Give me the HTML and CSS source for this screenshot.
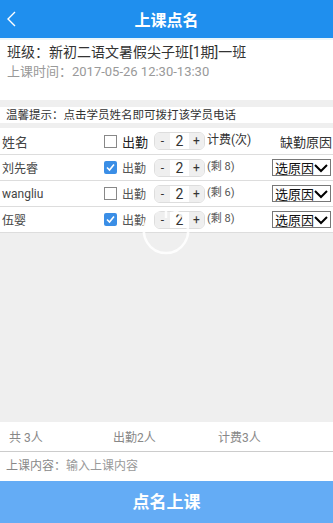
FILE: index.html
```html
<!DOCTYPE html>
<html>
  <head>
    <meta charset="utf-8" />
    <meta name="viewport" content="width=device-width, initial-scale=1">
    <title>上课点名</title>
    <link rel="stylesheet" href="styles.css">
  </head>
  <body>
    <div class="page">
      <div class="topbar">
        <svg class="back" width="10" height="16" viewBox="0 0 10 16"><polyline points="8,1 1,8 8,15" fill="none" stroke="#fff" stroke-width="1.4"/></svg>
        <div class="title">上课点名</div>
      </div>
      <div class="info">
        <div class="cls">班级：新初二语文暑假尖子班[1期]一班</div>
        <div class="time">上课时间：2017-05-26 12:30-13:30</div>
      </div>
      <div class="tip">温馨提示：点击学员姓名即可拨打该学员电话</div>
      <div class="table">
        <div class="row head">
          <div class="name">姓名</div>
          <div class="att"><span class="box"></span><span>出勤</span></div>
          <div class="step"><span class="btn">-</span><span class="val">2</span><span class="btn">+</span></div>
          <div class="fee">计费(次)</div>
          <div class="reason">缺勤原因</div>
        </div>
        <div class="row">
          <div class="name">刘先睿</div>
          <div class="att"><span class="box on"><svg width="13" height="13" viewBox="0 0 13 13"><polyline points="3,6.5 5.5,9 10,3.5" fill="none" stroke="#fff" stroke-width="1.6"/></svg></span><span>出勤</span></div>
          <div class="step"><span class="btn">-</span><span class="val">2</span><span class="btn">+</span></div>
          <div class="fee">(剩 8)</div>
          <div class="reason"><span class="sel">选原因<svg width="14" height="10" viewBox="0 0 14 10"><polyline points="1,2 7,8 13,2" fill="none" stroke="#000" stroke-width="2"/></svg></span></div>
        </div>
        <div class="row">
          <div class="name">wangliu</div>
          <div class="att"><span class="box"></span><span>出勤</span></div>
          <div class="step"><span class="btn">-</span><span class="val">2</span><span class="btn">+</span></div>
          <div class="fee">(剩 6)</div>
          <div class="reason"><span class="sel">选原因<svg width="14" height="10" viewBox="0 0 14 10"><polyline points="1,2 7,8 13,2" fill="none" stroke="#000" stroke-width="2"/></svg></span></div>
        </div>
        <div class="row">
          <div class="name">伍婴</div>
          <div class="att"><span class="box on"><svg width="13" height="13" viewBox="0 0 13 13"><polyline points="3,6.5 5.5,9 10,3.5" fill="none" stroke="#fff" stroke-width="1.6"/></svg></span><span>出勤</span></div>
          <div class="step"><span class="btn">-</span><span class="val">2</span><span class="btn">+</span></div>
          <div class="fee">(剩 8)</div>
          <div class="reason"><span class="sel">选原因<svg width="14" height="10" viewBox="0 0 14 10"><polyline points="1,2 7,8 13,2" fill="none" stroke="#000" stroke-width="2"/></svg></span></div>
        </div>
      </div>
      <div class="empty"></div>
      <div class="summary">
        <span class="s1">共 3人</span>
        <span class="s2">出勤2人</span>
        <span class="s3">计费3人</span>
      </div>
      <div class="content">上课内容：<span class="ph">输入上课内容</span></div>
      <div class="submit">点名上课</div>
      <svg class="spinner" width="50" height="50" viewBox="0 0 50 50">
        <path d="M27 3.2 A22 22 0 1 1 23 3.2" fill="none" stroke="rgba(255,255,255,0.85)" stroke-width="2.5"/>
        <line x1="25" y1="1" x2="25" y2="12" stroke="rgba(255,255,255,0.85)" stroke-width="2.5"/>
      </svg>
    </div>
  </body>
</html>
```

FILE: styles.css
```css
*{
  box-sizing: border-box;
}
body{
  margin: 0;
  font-family: Roboto, "Noto Sans CJK SC", sans-serif;
  color: #333;
}
.page{
  position: relative;
  width: 333px;
  height: 523px;
  display: flex;
  flex-direction: column;
  background: #efefef;
}
.topbar{
  height: 40px;
  background: #1f8fee;
  border-bottom: 2px solid #eaf6fb;
  display: flex;
  align-items: center;
  justify-content: center;
  position: relative;
}
.back{
  position: absolute;
  left: 7px;
  top: 11px;
}
.title{
  color: #fff;
  font-size: 16px;
  font-weight: bold;
}
.info{
  background: #fff;
  height: 60px;
  padding: 2px 7px 0;
}
.cls{
  font-size: 14px;
  line-height: 20px;
  color: #333;
}
.time{
  font-size: 13px;
  line-height: 20px;
  color: #999;
}
.tip{
  margin-top: 7px;
  background: #fff;
  height: 16px;
  font-size: 11.5px;
  line-height: 16px;
  padding-left: 6px;
  color: #333;
}
.table{
  margin-top: 5px;
  background: #fff;
}
.row{
  display: grid;
  grid-template-columns: 104px 50px 52px 1fr auto;
  align-items: center;
  height: 26px;
  border-bottom: 1px solid #ddd;
  font-size: 12px;
}
.row.head{
  height: 27px;
  font-size: 13px;
}
.name{
  padding-left: 2px;
  color: #444;
}
.att{
  display: flex;
  align-items: center;
  gap: 5px;
  color: #555;
}
.head .att{
  color: #222;
}
.box{
  width: 13px;
  height: 13px;
  border: 1px solid #888;
  background: #fff;
  display: inline-block;
}
.box.on{
  border: none;
  background: #3a8ee6;
  border-radius: 2px;
}
.box svg{
  display: block;
}
.step{
  display: flex;
  height: 18px;
  width: 51px;
  border: 1px solid #ddd;
  border-radius: 6px;
  overflow: hidden;
  font-size: 14px;
  line-height: 16px;
}
.step .btn{
  width: 15px;
  background: #efefef;
  text-align: center;
  font-size: 12px;
  color: #333;
}
.step .val{
  flex: 1;
  text-align: center;
  color: #333;
}
.fee{
  align-self: start;
  padding-top: 2px;
  padding-left: 1px;
  font-size: 11px;
  color: #555;
}
.head .fee{
  font-size: 12px;
  color: #333;
  padding-top: 2px;
}
.reason{
  padding-right: 2px;
  text-align: right;
}
.head .reason{
  padding-right: 1px;
}
.sel{
  display: inline-flex;
  align-items: center;
  height: 17px;
  width: 59px;
  border: 1px solid #777;
  font-size: 13px;
  color: #111;
  padding-left: 2px;
}
.empty{
  flex: 1;
}
.summary{
  background: #fff;
  height: 30px;
  border-bottom: 1px solid #ccc;
  display: flex;
  align-items: center;
  font-size: 12px;
  color: #888;
}
.s1{
  width: 113px;
  padding-left: 9px;
}
.s2{
  width: 105px;
}
.content{
  background: #fff;
  height: 29px;
  line-height: 29px;
  padding-left: 6px;
  font-size: 12px;
  color: #888;
}
.ph{
  color: #999;
}
.submit{
  height: 42px;
  background: #64acf5;
  color: #fff;
  font-size: 17px;
  font-weight: bold;
  text-align: center;
  line-height: 42px;
}
.spinner{
  position: absolute;
  left: 141px;
  top: 206px;
}
```
